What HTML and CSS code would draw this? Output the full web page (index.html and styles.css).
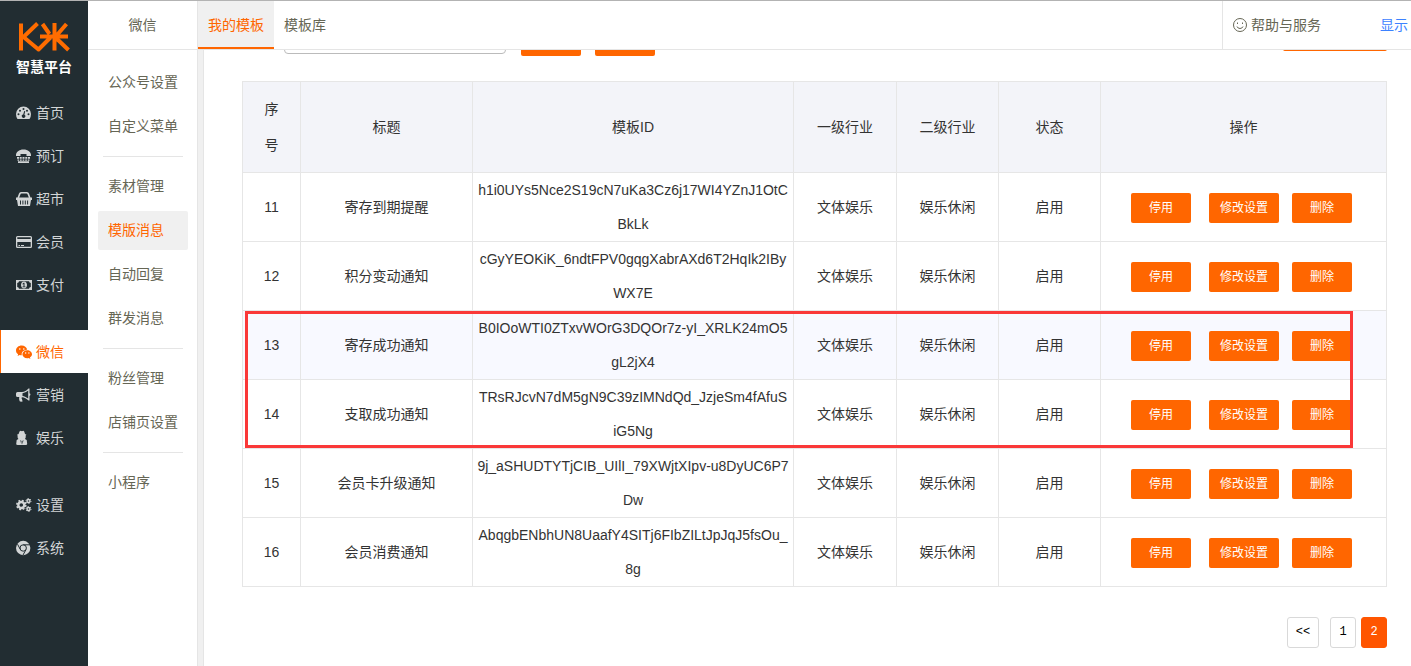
FILE: index.html
```html
<!DOCTYPE html>
<html lang="zh-CN">
<head>
<meta charset="utf-8">
<title>我的模板</title>
<link rel="stylesheet" href="styles.css">
</head>
<body>
<div class="app">
  <nav class="side">
    <div class="brand">
      <svg class="brand-mark" viewBox="0 0 52 30" aria-hidden="true">
        <path d="M3 1.500v27M19.500 1.500 5.500 15 20.500 27.500 32.500 15.500M22 14.500h28M24.500 2l7 10M36.500 1v27.500M48.500 2 39 13M38 16l12.500 12"/>
      </svg>
      <span class="brand-name">智慧平台</span>
    </div>
    <ul class="side-group">
      <li><a class="side-link" href="#"><svg class="icon" viewBox="0 0 16 16"><path fill-rule="evenodd" d="M7.500 1.500A7.500 7.500 0 0 0 0 9q0 3 1.500 5h12Q15 12 15 9a7.500 7.500 0 0 0-7.500-7.500zM1.500 9.300a1 1 0 1 0 2 0 1 1 0 0 0-2 0zM3 5.700a1 1 0 1 0 2 0 1 1 0 0 0-2 0zM6.500 4a1 1 0 1 0 2 0 1 1 0 0 0-2 0zM10 5.700a1 1 0 1 0 2 0 1 1 0 0 0-2 0zM11.500 9.300a1 1 0 1 0 2 0 1 1 0 0 0-2 0zM8.200 6l-1 3.500a1.700 1.700 0 1 0 1.200.2l.8-3.500z"/></svg>首页</a></li>
      <li><a class="side-link" href="#"><svg class="icon" viewBox="0 0 16 16"><path d="M0 7C0 4 3 1.500 7.500 1.500S15 4 15 7v1h-4.500V6h-6v2H0zM1 9h2v1.700H1zm2.700 0h2v1.700h-2zm2.800 0h2v1.700h-2zm2.800 0h2v1.700h-2zm2.700 0h2v1.700h-2zM1.500 11.500h1.700v1.200H1.500zm2.500 0h1.700v1.200H4zm2.600 0h1.700v1.200H6.600zm2.600 0h1.700v1.200H9.200zm2.500 0h1.700v1.200h-1.700zM2 13.300h11V15H2z"/></svg>预订</a></li>
      <li><a class="side-link" href="#"><svg class="icon" viewBox="0 0 16 16"><path fill-rule="evenodd" d="M0 6.500h1.500l1.500-4Q3.500 1 5 1h6q1.500 0 2 1.500l1.500 4H16V9h-1l-1 6H2L1 9H0zm3.200 0h9.600l-1.300-3.300Q11.300 2.500 10.500 2.500h-5q-.8 0-1 .7zM4 9.500v4h1v-4zm2.400 0v4h1v-4zm2.400 0v4h1v-4zm2.300 0v4h1v-4z"/></svg>超市</a></li>
      <li><a class="side-link" href="#"><svg class="icon" viewBox="0 0 16 16"><path fill-rule="evenodd" d="M1.500 2h13Q16 2 16 3.500v9q0 1.500-1.500 1.500h-13Q0 14 0 12.500v-9Q0 2 1.500 2zM1.300 3.300V5h13.400V3.300zm0 4.700v4.700h13.400V8zM2.500 11h1.500v1H2.500zm2.500 0h3v1H5z"/><path d="M1 5h14v3H1z"/></svg>会员</a></li>
      <li><a class="side-link" href="#"><svg class="icon" viewBox="0 0 16 16"><path fill-rule="evenodd" d="M0 3h16v10H0zm3 1.200A2 2 0 0 1 1.200 6v4A2 2 0 0 1 3 11.800h10a2 2 0 0 1 1.800-1.800V6A2 2 0 0 1 13 4.200z"/><path fill-rule="evenodd" d="M8 4.500c1.900 0 3 1.600 3 3.500s-1.100 3.500-3 3.500S5 9.900 5 8s1.100-3.500 3-3.500zm-.5 1.300L6.300 7l.5.500.7-.5v2.500h-1v.8h3v-.8h-1V5.800z"/></svg>支付</a></li>
    </ul>
    <ul class="side-group">
      <li><a class="side-link is-active" href="#"><svg class="icon" viewBox="0 0 16 16"><path fill-rule="evenodd" d="M5.700 1.500C2.500 1.500 0 3.700 0 6.400 0 8 .8 9.300 2.100 10.200L1.600 12l2-1.100c.7.200 1.400.3 2.200.3C5 8 8 5.700 11.200 5.700 10.700 3.300 8.400 1.500 5.700 1.500zM3 5a.8.800 0 1 0 1.600 0A.8.800 0 0 0 3 5zm4 0a.8.800 0 1 0 1.600 0A.8.800 0 0 0 7 5z"/><path fill-rule="evenodd" d="M11.200 6.300c-2.700 0-4.800 1.800-4.800 4s2.100 4 4.800 4c.6 0 1.100-.1 1.600-.2l1.600.9-.5-1.500c1.300-.8 2.100-1.900 2.100-3.200 0-2.200-2.200-4-4.800-4zM9 9a.7.700 0 1 0 1.400 0A.7.700 0 0 0 9 9zm3.200 0a.7.700 0 1 0 1.400 0 .7.700 0 0 0-1.400 0z"/></svg>微信</a></li>
      <li><a class="side-link" href="#"><svg class="icon" viewBox="0 0 16 16"><path fill-rule="evenodd" d="M13.500 1.500v4.700a1.500 1.500 0 0 1 0 2.800v4.500h-1c-2-2-4-3-6.500-3.300-.7.600-.5 1.300.2 2-.4.700 0 1.300.8 1.900-1 .9-2.700.8-3.300.2-.4-1.500-.9-2.700-.4-4.300H1.500Q0 10 0 8.500v-2Q0 5 1.500 5H6c2.500 0 4.500-1.400 6.500-3.500zM12.200 3.500C10.500 5 8.500 5.900 6.500 6.200v2.700c2 .3 4 1.200 5.700 2.600z"/></svg>营销</a></li>
      <li><a class="side-link" href="#"><svg class="icon" viewBox="0 0 16 16"><path fill-rule="evenodd" d="M3.500 1.500Q4.500.5 5.300 1q.7.300 1.300 0 1-.5 1.700.7L9 4l1.500.7-.8.800v2L9 9l1.700 1 .5 4q0 1-1.500 1h-8Q.2 15 .2 14l.5-4 1.700-1-.8-1.500v-2L1 4.700 2.600 4zM4.300 10l1 4.500.2-3.500zm3.200 0-1.200 1 .2 3.500z"/></svg>娱乐</a></li>
    </ul>
    <ul class="side-group">
      <li><a class="side-link" href="#"><svg class="icon" viewBox="0 0 16 16"><g fill="none" stroke="currentColor"><circle cx="5.300" cy="8" r="3" stroke-width="2.400"/><circle cx="5.300" cy="8" r="4.500" stroke-width="1.600" stroke-dasharray="1.900 1.634"/><circle cx="12.500" cy="4" r="1.500" stroke-width="1.400"/><circle cx="12.500" cy="4" r="2.500" stroke-width="1" stroke-dasharray="1.200 1.418"/><circle cx="12.500" cy="12" r="1.500" stroke-width="1.400"/><circle cx="12.500" cy="12" r="2.500" stroke-width="1" stroke-dasharray="1.200 1.418"/></g></svg>设置</a></li>
      <li><a class="side-link" href="#"><svg class="icon" viewBox="0 0 16 16"><circle cx="7.200" cy="8" r="7.200"/><g class="icon-cut"><circle cx="7.200" cy="8" r="3.200"/><path d="M7.200 4.800H14M4.400 9.600 1.500 4.200M10 9.600 7 15"/></g></svg>系统</a></li>
    </ul>
  </nav>

  <aside class="submenu">
    <h2 class="submenu-title">微信</h2>
    <div class="submenu-body">
      <ul class="submenu-group">
        <li><a class="submenu-link" href="#">公众号设置</a></li>
        <li><a class="submenu-link" href="#">自定义菜单</a></li>
      </ul>
      <ul class="submenu-group">
        <li><a class="submenu-link" href="#">素材管理</a></li>
        <li><a class="submenu-link is-active" href="#">模版消息</a></li>
        <li><a class="submenu-link" href="#">自动回复</a></li>
        <li><a class="submenu-link" href="#">群发消息</a></li>
      </ul>
      <ul class="submenu-group">
        <li><a class="submenu-link" href="#">粉丝管理</a></li>
        <li><a class="submenu-link" href="#">店铺页设置</a></li>
      </ul>
      <ul class="submenu-group">
        <li><a class="submenu-link" href="#">小程序</a></li>
      </ul>
    </div>
  </aside>

  <div class="page">
    <header class="topbar">
      <nav class="tabs">
        <a class="tab is-active" href="#">我的模板</a>
        <a class="tab" href="#">模板库</a>
      </nav>
      <div class="tools">
        <a class="help" href="#"><svg class="smile" viewBox="0 0 16 16"><circle cx="8" cy="8" r="6.500"/><path d="M5 9.500q.8 2 3 2t3-2M5.500 5.500v1.500M10.500 5.500v1.500"/></svg>帮助与服务</a>
        <a class="show" href="#">显示</a>
      </div>
    </header>
    <main class="content">
      <div class="toolbar">
        <input class="search" type="text" aria-label="搜索">
        <button class="btn" type="button" aria-label="查询"></button>
        <button class="btn" type="button" aria-label="重置"></button>
        <button class="btn btn-add" type="button" aria-label="添加模板"></button>
      </div>
      <div class="table-wrap">
        <table class="grid">
          <colgroup><col class="c-no"><col class="c-title"><col class="c-id"><col class="c-trade"><col class="c-sub"><col class="c-sub"><col></colgroup>
          <thead>
            <tr><th><span class="stack">序号</span></th><th>标题</th><th>模板ID</th><th>一级行业</th><th>二级行业</th><th>状态</th><th>操作</th></tr>
          </thead>
          <tbody>
            <tr><td>11</td><td>寄存到期提醒</td><td>h1i0UYs5Nce2S19cN7uKa3Cz6j17WI4YZnJ1OtC<br>BkLk</td><td>文体娱乐</td><td>娱乐休闲</td><td>启用</td><td><div class="actions"><button class="btn">停用</button><button class="btn btn-wide">修改设置</button><button class="btn">删除</button></div></td></tr>
            <tr><td>12</td><td>积分变动通知</td><td>cGyYEOKiK_6ndtFPV0gqgXabrAXd6T2HqIk2IBy<br>WX7E</td><td>文体娱乐</td><td>娱乐休闲</td><td>启用</td><td><div class="actions"><button class="btn">停用</button><button class="btn btn-wide">修改设置</button><button class="btn">删除</button></div></td></tr>
            <tr class="is-hover"><td>13</td><td>寄存成功通知</td><td>B0IOoWTI0ZTxvWOrG3DQOr7z-yI_XRLK24mO5<br>gL2jX4</td><td>文体娱乐</td><td>娱乐休闲</td><td>启用</td><td><div class="actions"><button class="btn">停用</button><button class="btn btn-wide">修改设置</button><button class="btn">删除</button></div></td></tr>
            <tr><td>14</td><td>支取成功通知</td><td>TRsRJcvN7dM5gN9C39zIMNdQd_JzjeSm4fAfuS<br>iG5Ng</td><td>文体娱乐</td><td>娱乐休闲</td><td>启用</td><td><div class="actions"><button class="btn">停用</button><button class="btn btn-wide">修改设置</button><button class="btn">删除</button></div></td></tr>
            <tr><td>15</td><td>会员卡升级通知</td><td>9j_aSHUDTYTjCIB_UIlI_79XWjtXIpv-u8DyUC6P7<br>Dw</td><td>文体娱乐</td><td>娱乐休闲</td><td>启用</td><td><div class="actions"><button class="btn">停用</button><button class="btn btn-wide">修改设置</button><button class="btn">删除</button></div></td></tr>
            <tr><td>16</td><td>会员消费通知</td><td>AbqgbENbhUN8UaafY4SITj6FIbZILtJpJqJ5fsOu_<br>8g</td><td>文体娱乐</td><td>娱乐休闲</td><td>启用</td><td><div class="actions"><button class="btn">停用</button><button class="btn btn-wide">修改设置</button><button class="btn">删除</button></div></td></tr>
          </tbody>
        </table>
        <div class="marker"></div>
      </div>
      <nav class="pager">
        <a class="pager-link pager-prev" href="#">&lt;&lt;</a>
        <a class="pager-link" href="#">1</a>
        <a class="pager-link is-active" href="#">2</a>
      </nav>
    </main>
  </div>
</div>
</body>
</html>
```
FILE: styles.css
```css
* { box-sizing: border-box; }

body {
  margin: 0;
  font: 14px/20px "Liberation Sans", "Noto Sans CJK SC", sans-serif;
  color: #333;
  background: #fff;
}

ul { list-style: none; margin: 0; padding: 0; }
a { color: inherit; text-decoration: none; }

.app {
  display: flex;
  height: 100vh;
  overflow: hidden;
  border-top: 1px solid #b3b3b3;
}

/* dark main navigation */
.side {
  flex: none;
  width: 88px;
  background: #222d32;
  color: #d2d5d6;
}
.brand {
  display: flex;
  flex-direction: column;
  align-items: center;
  height: 90px;
  padding-top: 21px;
}
.brand-mark {
  width: 52px;
  height: 30px;
  fill: none;
  stroke: #ff6c00;
  stroke-width: 4;
  stroke-linejoin: round;
}
.brand-name {
  margin-top: 5px;
  font-size: 14px;
  font-weight: bold;
  color: #fff;
}
.side-group + .side-group { margin-top: 24px; }
.side-link {
  display: flex;
  align-items: center;
  gap: 4px;
  height: 43px;
  padding-left: 15px;
  border-left: 1px solid transparent;
}
.side-link.is-active {
  background: #fff;
  border-left-color: #ff6600;
  color: #ff6600;
}
.icon {
  width: 16px;
  height: 16px;
  fill: currentColor;
}
.icon-cut {
  fill: none;
  stroke: #222d32;
  stroke-width: 1;
}

/* second level menu */
.submenu {
  flex: none;
  width: 110px;
  border-right: 1px solid #e5e5e5;
  color: #666655;
}
.submenu-title {
  height: 49px;
  margin: 0;
  border-bottom: 1px solid #e5e5e5;
  font-size: 14px;
  font-weight: normal;
  line-height: 48px;
  text-align: center;
}
.submenu-body { padding: 13px 9px 0 10px; }
.submenu-group {
  display: grid;
  gap: 5px;
}
.submenu-group + .submenu-group::before {
  content: "";
  height: 1px;
  margin: 10px 5px 5px;
  background: #e5e5e5;
}
.submenu-link {
  display: block;
  padding-left: 10px;
  border-radius: 2px;
  line-height: 39px;
}
.submenu-link.is-active {
  background: #f0f0f0;
  color: #ff6600;
}

/* top bar */
.page {
  display: flex;
  flex: 1;
  flex-direction: column;
  min-width: 0;
}
.topbar {
  display: flex;
  flex: none;
  justify-content: space-between;
  height: 49px;
  border-bottom: 1px solid #e5e5e5;
  color: #666655;
}
.tabs { display: flex; }
.tab {
  padding: 0 10px;
  line-height: 48px;
}
.tab.is-active {
  background: #f0f0f0;
  box-shadow: inset 0 -2px #ff6600;
  color: #ff6600;
}
.tools {
  display: flex;
  align-items: center;
  justify-content: space-between;
  width: 189px;
  padding: 0 3px 0 9px;
  border-left: 1px solid #e5e5e5;
}
.help {
  display: flex;
  align-items: center;
  gap: 3px;
}
.smile {
  width: 16px;
  height: 16px;
  fill: none;
  stroke: #666655;
}
.show { color: #3c82ff; }

/* scrolled content */
.content {
  flex: 1;
  min-height: 0;
  overflow: hidden;
  padding: 0 24px 0 39px;
  border-left: 5px solid #f0f0f0;
  box-shadow: inset 1px 0 #e5e5e5;
}
.toolbar {
  display: flex;
  align-items: flex-end;
  gap: 14px;
  margin: -29px 0 25px;
  padding-left: 42px;
}
.search {
  width: 222px;
  height: 30px;
  margin: 0 1px 2px 0;
  border: 1px solid #bbb;
  border-radius: 4px;
}
.btn {
  width: 60px;
  height: 30px;
  padding: 0;
  border: 0;
  border-radius: 2px;
  background: #ff6600;
  color: #fff;
  font: 12px/30px "Liberation Sans", "Noto Sans CJK SC", sans-serif;
}
.btn-wide { width: 70px; }
.btn-add {
  width: 104px;
  margin: 0 0 5px auto;
}

.table-wrap { position: relative; }
.grid {
  width: 100%;
  table-layout: fixed;
  border-collapse: collapse;
  text-align: center;
}
.c-no { width: 58px; }
.c-title { width: 172px; }
.c-id { width: 321px; }
.c-trade { width: 103px; }
.c-sub { width: 102px; }
.grid th,
.grid td {
  padding: 0 4px;
  border: 1px solid #e6e6e6;
  line-height: 34px;
  word-break: break-all;
}
.grid th {
  padding: 9px 4px;
  background: #f3f4f9;
  font-weight: normal;
  line-height: 36px;
}
.stack {
  display: block;
  width: 14px;
  margin: 0 auto;
}
.is-hover { background: #f8f9ff; }
.actions {
  display: flex;
  justify-content: center;
  gap: 13px;
  padding: 2px 4px 0 0;
}
.actions .btn:first-child { margin-right: 5px; }

/* red frame drawn over rows 13 and 14 */
.marker {
  position: absolute;
  top: 230px;
  right: 34px;
  left: 3px;
  height: 137px;
  border: 3px solid #fa3838;
}

.pager {
  display: flex;
  justify-content: flex-end;
  gap: 5px;
  margin-top: 30px;
}
.pager-link {
  width: 26px;
  border: 1px solid #d9d9d9;
  border-radius: 3px;
  color: #000;
  font: 12px/29px "Liberation Mono", monospace;
  text-align: center;
}
.pager-prev {
  width: 32px;
  margin-right: 6px;
}
.pager-link.is-active {
  border-color: #ff5500;
  background: #ff5500;
  color: #fff;
}
```
